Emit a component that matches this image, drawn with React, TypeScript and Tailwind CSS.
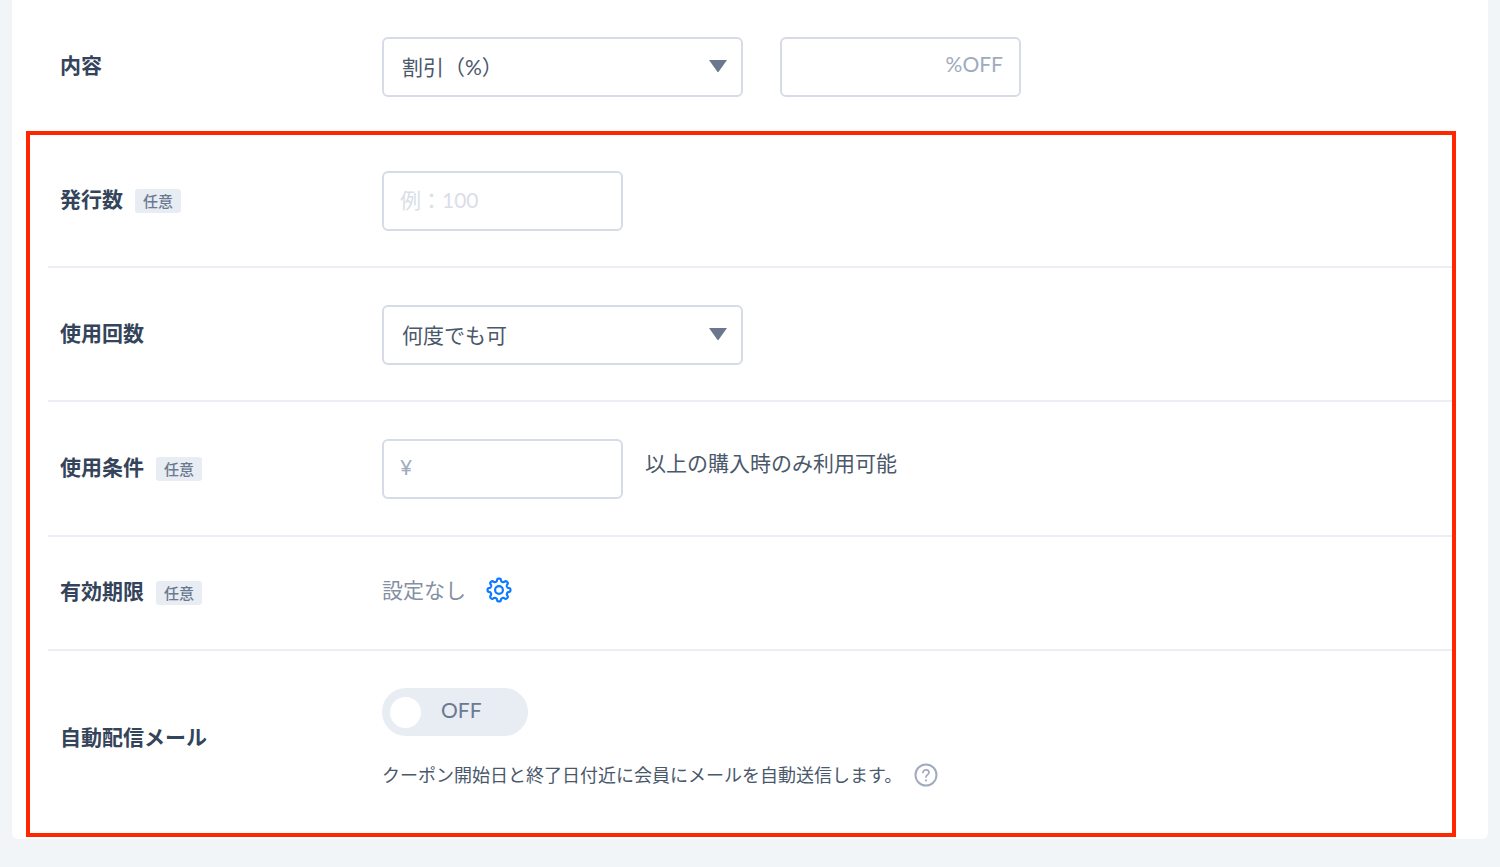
import { useState, type ReactNode } from "react";

// Eight soft teeth around the centre of a 26x26 box
const gearPath = "M" + Array.from({ length: 160 }, (_, i) => {
    const angle = (i / 160) * Math.PI * 2;
    const radius = 10.1 + 1.4 * Math.tanh(2 * Math.cos(8 * angle));
    return `${(13 + radius * Math.cos(angle)).toFixed(2)} ${(13 + radius * Math.sin(angle)).toFixed(2)}`;
}).join("L") + "Z";

function GearIcon() {
    return (
        <svg className="size-[26px]" viewBox="0 0 26 26" fill="none" stroke="currentColor" strokeWidth="2.2" strokeLinejoin="round" aria-hidden="true">
            <path d={gearPath} />
            <circle cx="13" cy="13" r="3.9" />
        </svg>
    );
}

function HelpIcon() {
    return (
        <svg className="size-6" viewBox="0 0 24 24" fill="none" stroke="currentColor" strokeLinecap="round" aria-hidden="true">
            <circle cx="12" cy="12" r="10.5" strokeWidth="2" />
            <path d="M9 9.6C9 7.8 10.2 6.8 12 6.8S15 7.9 15 9.5C15 11.5 12 11.8 12 14" strokeWidth="1.7" />
            <path d="M12 17.2V17.4" strokeWidth="2" />
        </svg>
    );
}

function FormRow({ label, htmlFor, optional, className, children }: {
    label: string;
    htmlFor: string;
    optional?: boolean;
    className: string;
    children: ReactNode;
}) {
    return (
        <div className={`flex items-center pl-3 ${className}`}>
            <div className="flex w-[322px] shrink-0 items-center gap-3">
                <label htmlFor={htmlFor} className="pb-1 font-semibold text-[#34445a]">{label}</label>
                {optional && (
                    <span className="rounded-[3px] bg-[#e8ecf3] px-2 text-[15px] leading-6 font-medium text-[#6b7990]">任意</span>
                )}
            </div>
            <div className="min-w-0 flex-1">{children}</div>
        </div>
    );
}

function SelectBox({ id, options }: { id: string; options: string[] }) {
    return (
        <div className="relative w-[361px]">
            <select
                id={id}
                className="h-[60px] w-full appearance-none rounded-md border-2 border-[#d6dbe7] bg-white pr-12 pl-[18px] text-[#4a586b]"
            >
                {options.map((option) => (
                    <option key={option}>{option}</option>
                ))}
            </select>
            <svg
                className="pointer-events-none absolute top-[23px] right-4 h-3 w-[18px] fill-[#6b778c]"
                viewBox="0 0 18 12"
                aria-hidden="true"
            >
                <path d="M0 0H18L9.8 11.4Q9 12.4 8.2 11.4Z" />
            </svg>
        </div>
    );
}

const inputClass = "h-[60px] w-[241px] rounded-md border-2 border-[#d6dbe7] bg-white px-4 pb-1 text-[#4a586b] placeholder:text-[#d9dee8]";

export default function App() {
    const [autoMail, setAutoMail] = useState(false);

    return (
        <div className="min-h-screen bg-[#f1f5f8] px-3 pb-7 font-[Lato,'Noto_Sans_CJK_JP',sans-serif] text-[21px] leading-8">
            <form className="rounded-b-md bg-white pr-8 pb-0.5 pl-3.5">
                <div className="pt-[37px] pb-[34px] pl-[22px]">
                    <FormRow label="内容" htmlFor="discount-type" className="">
                        <div className="flex gap-[37px]">
                            <SelectBox id="discount-type" options={["割引（%）", "割引（円）"]} />
                            <div className="relative">
                                <input type="text" aria-label="割引率" className={inputClass} />
                                <span className="pointer-events-none absolute top-[11px] right-[18px] text-[#a0abbd]">%OFF</span>
                            </div>
                        </div>
                    </FormRow>
                </div>

                <div className="divide-y-2 divide-[#ebeff5] border-4 border-[#ff2600] pl-[18px]">
                    <FormRow label="発行数" htmlFor="issue-count" optional className="pt-9 pb-[35px]">
                        <input id="issue-count" type="text" placeholder="例：100" className={inputClass} />
                    </FormRow>

                    <FormRow label="使用回数" htmlFor="use-count" className="pt-[37px] pb-[35px]">
                        <SelectBox id="use-count" options={["何度でも可", "1回のみ"]} />
                    </FormRow>

                    <FormRow label="使用条件" htmlFor="min-price" optional className="pt-[37px] pb-9">
                        <div className="flex items-center gap-[22px]">
                            <div className="relative">
                                <input id="min-price" type="text" className={`${inputClass} pl-10`} />
                                <span className="pointer-events-none absolute top-3 left-[18px] text-[#a0abbd]">¥</span>
                            </div>
                            <span className="pb-3 text-[#4a586b]">以上の購入時のみ利用可能</span>
                        </div>
                    </FormRow>

                    <FormRow label="有効期限" htmlFor="expiry" optional className="py-[37px]">
                        <div className="flex items-center gap-5 pb-1.5">
                            <span className="text-[#8490a3]">設定なし</span>
                            <button id="expiry" type="button" aria-label="有効期限を設定" className="text-[#0d7bff]">
                                <GearIcon />
                            </button>
                        </div>
                    </FormRow>

                    <FormRow label="自動配信メール" htmlFor="auto-mail" className="pt-[37px] pb-11">
                        <button
                            id="auto-mail"
                            type="button"
                            role="switch"
                            aria-checked={autoMail}
                            onClick={() => setAutoMail(!autoMail)}
                            className="flex h-12 w-[146px] items-center gap-5 rounded-full bg-[#e8ecf3] px-2 text-[#6b7990]"
                        >
                            <span className="size-[31px] rounded-full bg-white" />
                            <span className="pb-1">{autoMail ? "ON" : "OFF"}</span>
                        </button>
                        <div className="mt-[25px] flex items-center gap-3 text-lg text-[#4a586b]">
                            <p>クーポン開始日と終了日付近に会員にメールを自動送信します。</p>
                            <button type="button" aria-label="ヘルプ" className="text-[#a0abbd]">
                                <HelpIcon />
                            </button>
                        </div>
                    </FormRow>
                </div>
            </form>
        </div>
    );
}
